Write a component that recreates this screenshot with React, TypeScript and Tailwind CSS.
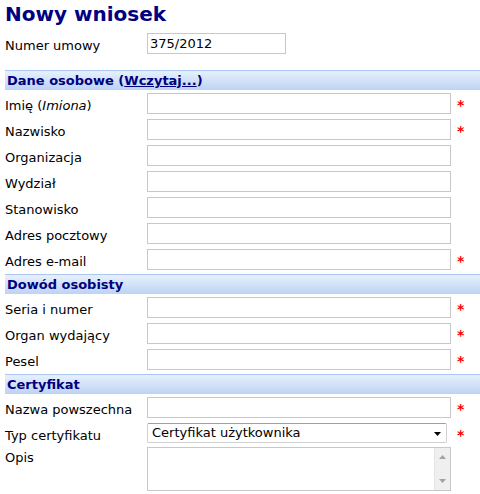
import { ReactNode } from "react";

const FONT = "font-['Verdana','DejaVu_Sans',sans-serif]";

function Req() {
  return <span className="ml-[6px] pt-[2px] text-[14px] font-bold leading-[21px] text-[#ff0000]">*</span>;
}

function Row({ label, required, children }: { label: ReactNode; required?: boolean; children?: ReactNode }) {
  return (
    <div className="flex h-[26px] items-start pt-[3px]">
      <label className="w-[142px] shrink-0 pt-[2px] text-[13px] leading-[21px] text-black">{label}</label>
      <div className="w-[304px] shrink-0">
        {children ?? <input className="block h-[21px] w-[304px] border border-[#c8c8c8] px-[2px] text-[13px] outline-none" />}
      </div>
      {required && <Req />}
    </div>
  );
}

function Section({ title }: { title: ReactNode }) {
  return (
    <div className="mt-[2px] flex h-[20px] items-center border-t border-[#a9c7f0] bg-gradient-to-b from-[#e8f0fd] to-[#bcd3f3] pl-[2px] text-[13px] font-bold text-[#000080]">
      {title}
    </div>
  );
}

export default function App() {
  return (
    <div className={`${FONT} w-[480px] bg-white pl-[5px] pt-[1px]`}>
      <h1 className="h-[29px] text-[20px] font-bold leading-[26px] text-[#000080]">Nowy wniosek</h1>
      <Row label="Numer umowy">
        <input
          defaultValue="375/2012"
          className="block h-[21px] w-[139px] border border-[#c8c8c8] px-[2px] pb-[1px] text-[13px] outline-none"
        />
      </Row>
      <div className="h-[12px]" />
      <Section
        title={
          <>
            Dane osobowe (<a className="underline">Wczytaj...</a>)
          </>
        }
      />
      <Row label={<>Imię (<i>Imiona</i>)</>} required />
      <Row label="Nazwisko" required />
      <Row label="Organizacja" />
      <Row label="Wydział" />
      <Row label="Stanowisko" />
      <Row label="Adres pocztowy" />
      <Row label="Adres e-mail" required />
      <Section title="Dowód osobisty" />
      <Row label="Seria i numer" required />
      <Row label="Organ wydający" required />
      <Row label="Pesel" required />
      <Section title="Certyfikat" />
      <Row label="Nazwa powszechna" required />
      <Row label="Typ certyfikatu" required>
        <div className="relative flex h-[20px] w-[300px] items-center rounded-[2px] border border-[#d0d0d0] border-t-[#a0a0a0] px-[4px] text-[13px]">
          <span>Certyfikat użytkownika</span>
          <svg className="absolute right-[5px] top-[8px]" width="7" height="4" viewBox="0 0 7 4">
            <path d="M0 0h7L3.5 4z" fill="#000" />
          </svg>
        </div>
      </Row>
      <div className="flex">
        <label className="w-[142px] shrink-0 pt-[2px] text-[13px]">Opis</label>
        <div className="mt-[1px] flex h-[44px] w-[304px] border border-[#c8c8c8]">
          <div className="flex-1" />
          <div className="flex w-[16px] flex-col items-center justify-between border-l border-[#e3e3e3] bg-[#efefef] py-[7px]">
            <svg width="7" height="4" viewBox="0 0 7 4">
              <path d="M0 4h7L3.5 0z" fill="#a3a3a3" />
            </svg>
            <svg width="7" height="4" viewBox="0 0 7 4">
              <path d="M0 0h7L3.5 4z" fill="#a3a3a3" />
            </svg>
          </div>
        </div>
      </div>
    </div>
  );
}
